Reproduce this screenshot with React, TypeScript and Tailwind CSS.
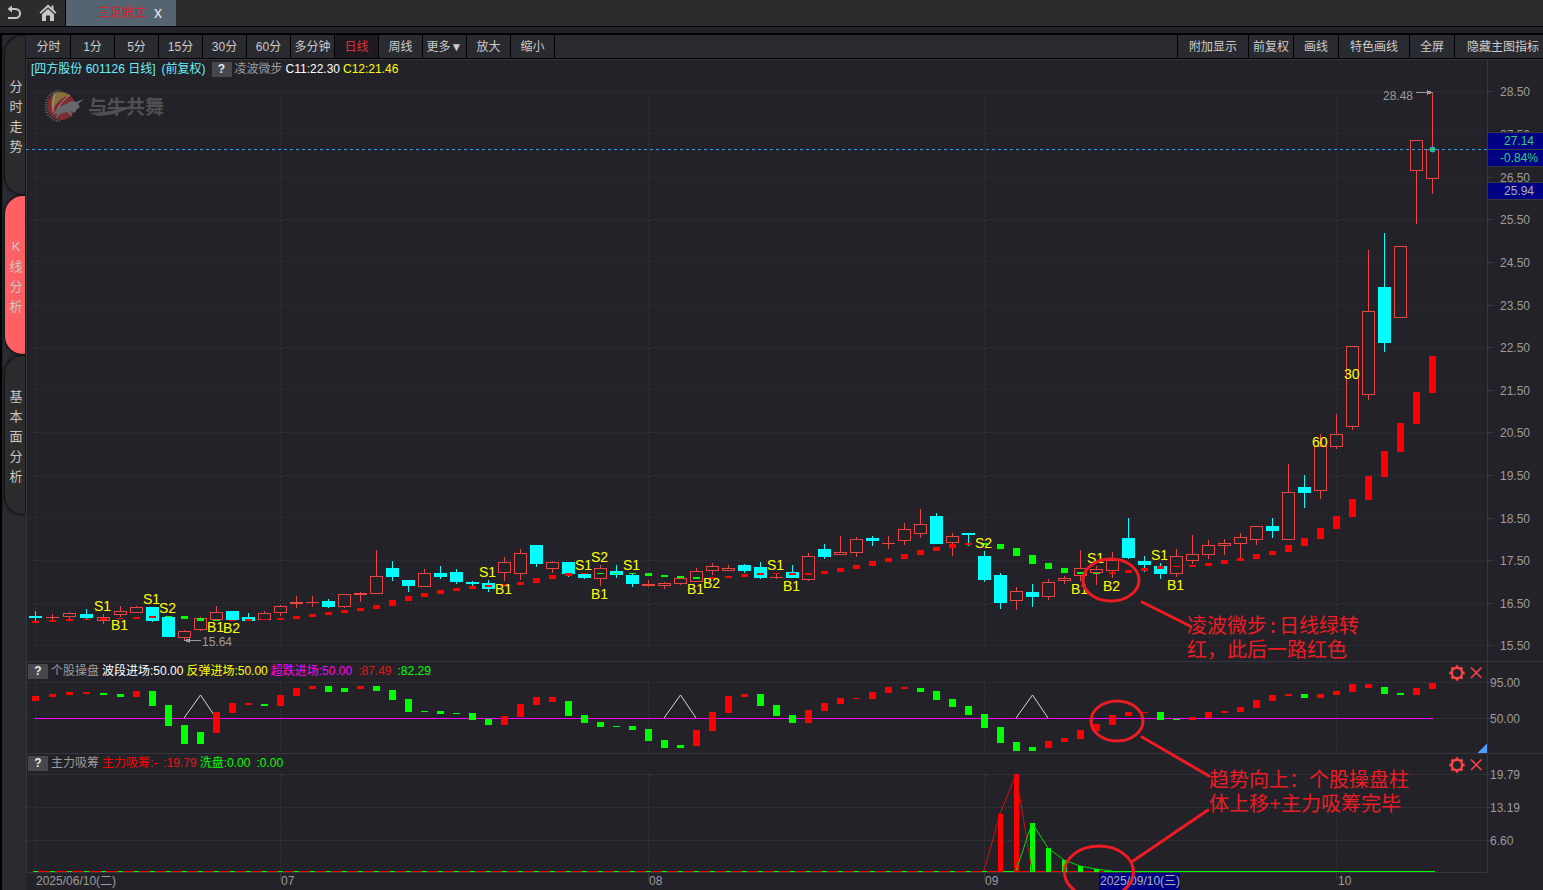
import React from "react";

type Bar = [number, number, number];
type Candle = [number, number, number, number, number];

// up(1)/down(0), high, body top, body bottom, low
const candles: Candle[] = [
  [0, 611, 616, 618, 621], [1, 614, 617, 618, 620], [1, 612, 613, 617, 619], [0, 609, 614, 618, 619],
  [1, 614, 617, 621, 624], [1, 606, 611, 615, 617], [1, 606, 607, 613, 613], [0, 607, 607, 621, 622],
  [0, 616, 617, 637, 637], [1, 630, 631, 638, 640], [1, 617, 618, 630, 631], [1, 606, 612, 620, 620],
  [0, 611, 611, 620, 620], [0, 613, 617, 621, 621], [1, 611, 613, 620, 620], [1, 605, 606, 613, 616],
  [1, 596, 602, 604, 608], [1, 596, 602, 603, 607], [0, 599, 601, 607, 608], [1, 594, 594, 607, 608],
  [1, 592, 593, 595, 602], [1, 550, 576, 594, 594], [0, 561, 568, 577, 581], [0, 580, 580, 586, 592],
  [1, 569, 573, 587, 587], [0, 566, 573, 577, 579], [0, 569, 572, 582, 584], [0, 581, 582, 584, 586],
  [0, 580, 583, 589, 592], [1, 557, 562, 573, 581], [1, 549, 553, 574, 580], [0, 545, 545, 564, 567],
  [1, 561, 562, 569, 573], [0, 562, 562, 574, 577], [0, 574, 574, 578, 579], [1, 565, 568, 579, 586],
  [0, 565, 571, 575, 578], [0, 573, 575, 584, 587], [1, 580, 584, 586, 587], [1, 582, 583, 586, 589],
  [1, 578, 578, 584, 585], [1, 568, 571, 582, 582], [1, 563, 566, 571, 575], [1, 565, 568, 571, 571],
  [0, 564, 565, 571, 573], [0, 562, 567, 578, 579], [1, 574, 577, 578, 579], [0, 565, 572, 578, 578],
  [1, 553, 556, 580, 581], [0, 544, 549, 557, 559], [1, 536, 552, 555, 555], [1, 537, 539, 553, 557],
  [0, 536, 538, 541, 546], [1, 536, 543, 544, 549], [1, 523, 529, 541, 545], [1, 509, 524, 534, 538],
  [0, 513, 516, 544, 544], [1, 533, 536, 543, 556], [0, 533, 533, 535, 546], [0, 551, 556, 580, 582],
  [0, 573, 575, 603, 609], [1, 587, 591, 601, 610], [0, 584, 592, 597, 607], [1, 579, 582, 597, 600],
  [1, 576, 578, 581, 584], [1, 550, 568, 576, 581], [1, 566, 569, 573, 585], [1, 552, 560, 571, 578],
  [0, 518, 538, 558, 559], [0, 556, 561, 565, 572], [0, 563, 566, 574, 579], [1, 549, 556, 574, 577],
  [1, 535, 554, 561, 564], [1, 540, 545, 555, 559], [1, 539, 543, 546, 555], [1, 533, 537, 544, 560],
  [1, 526, 526, 540, 545], [0, 518, 526, 531, 538], [1, 464, 492, 540, 540], [0, 475, 487, 493, 508],
  [1, 434, 446, 491, 499], [1, 414, 434, 447, 449], [1, 346, 346, 427, 430], [1, 250, 311, 395, 400],
  [0, 233, 287, 343, 352], [1, 246, 246, 318, 318], [1, 140, 140, 171, 224], [1, 92, 149, 179, 194],
];

// red(1)/green(0), top, bottom
const trend: Bar[] = [
  [1, 621, 623], [1, 620, 622], [1, 619, 621], [1, 619, 620], [1, 618, 620], [1, 618, 619], [1, 617, 619], [1, 616, 618],
  [0, 616, 617], [0, 616, 619], [0, 618, 621], [0, 620, 621], [1, 620, 621], [1, 619, 621], [1, 619, 620], [1, 618, 620],
  [1, 616, 619], [1, 614, 617], [1, 612, 615], [1, 610, 613], [1, 608, 611], [1, 605, 609], [1, 600, 606], [1, 596, 601],
  [1, 593, 597], [1, 590, 594], [1, 588, 591], [1, 586, 589], [1, 585, 587], [1, 584, 586], [1, 582, 585], [1, 578, 583],
  [1, 575, 579], [1, 573, 576], [1, 573, 574], [0, 573, 574], [0, 573, 574], [0, 573, 574], [0, 573, 576], [0, 575, 577],
  [0, 576, 578], [0, 577, 579], [1, 577, 579], [1, 576, 578], [1, 574, 577], [1, 573, 575], [1, 573, 574], [1, 573, 575],
  [1, 573, 575], [1, 571, 574], [1, 568, 572], [1, 565, 569], [1, 561, 566], [1, 558, 562], [1, 554, 559], [1, 550, 555],
  [1, 547, 551], [1, 544, 548], [1, 543, 545], [0, 543, 545], [0, 544, 549], [0, 548, 556], [0, 555, 564], [0, 563, 569],
  [0, 568, 573], [0, 572, 574], [0, 573, 574], [1, 572, 574], [1, 570, 573], [1, 568, 571], [1, 566, 569], [1, 566, 567],
  [1, 565, 567], [1, 563, 566], [1, 560, 564], [1, 558, 561], [1, 554, 559], [1, 551, 555], [1, 545, 552], [1, 538, 546],
  [1, 528, 539], [1, 516, 529], [1, 499, 517], [1, 476, 500], [1, 451, 477], [1, 423, 452], [1, 392, 424], [1, 356, 393],
];

const swing: Bar[] = [
  [1, 696, 701], [1, 694, 697], [1, 692, 695], [1, 692, 694], [0, 693, 695], [0, 694, 697], [1, 691, 697], [0, 691, 706],
  [0, 705, 726], [0, 725, 744], [0, 732, 744], [1, 712, 733], [1, 703, 713], [1, 703, 705], [0, 704, 706], [1, 695, 706],
  [1, 688, 696], [1, 686, 689], [0, 686, 692], [0, 688, 692], [1, 686, 689], [0, 686, 691], [0, 690, 700], [0, 699, 712],
  [0, 711, 712], [0, 711, 714], [0, 713, 714], [0, 713, 720], [0, 719, 725], [1, 716, 725], [1, 704, 717], [1, 697, 705],
  [1, 697, 702], [0, 701, 716], [0, 715, 723], [0, 722, 727], [0, 726, 727], [0, 726, 730], [0, 729, 741], [0, 740, 748],
  [0, 745, 748], [1, 730, 746], [1, 712, 731], [1, 696, 713], [1, 694, 697], [0, 694, 706], [0, 705, 716], [0, 715, 723],
  [1, 710, 723], [1, 703, 711], [1, 698, 704], [1, 698, 699], [1, 692, 699], [1, 687, 693], [1, 687, 689], [0, 688, 692],
  [0, 691, 700], [0, 699, 707], [0, 706, 715], [0, 714, 728], [0, 727, 743], [0, 742, 751], [0, 747, 751], [1, 741, 748],
  [1, 738, 742], [1, 730, 739], [1, 724, 731], [1, 715, 725], [1, 712, 716], [1, 712, 713], [0, 712, 720], [0, 719, 720],
  [1, 717, 720], [1, 712, 718], [1, 711, 713], [1, 707, 712], [1, 700, 708], [1, 695, 701], [1, 694, 696], [0, 694, 698],
  [1, 694, 698], [1, 691, 695], [1, 684, 692], [1, 684, 688], [0, 687, 694], [0, 693, 695], [1, 688, 695], [1, 683, 689],
];

const marks: [string, number, number][] = [
  ["S1", 94, 611], ["B1", 111, 630], ["S1", 143, 604], ["S2", 159, 613], ["B1", 207, 632], ["B2", 223, 633],
  ["S1", 479, 577], ["B1", 495, 594], ["S1", 575, 570], ["S2", 591, 562], ["B1", 591, 599], ["S1", 623, 570],
  ["B1", 687, 594], ["B2", 703, 588], ["S1", 767, 570], ["B1", 783, 591], ["S2", 975, 548], ["B1", 1071, 594],
  ["S1", 1087, 563], ["B2", 1103, 591], ["S1", 1151, 560], ["B1", 1167, 590], ["60", 1312, 447], ["30", 1344, 379],
];

const priceTicks: [string, number][] = [
  ["28.50", 91], ["27.50", 134], ["26.50", 177], ["25.50", 219], ["24.50", 262], ["23.50", 305], ["22.50", 347],
  ["21.50", 390], ["20.50", 432], ["19.50", 475], ["18.50", 518], ["17.50", 560], ["16.50", 603], ["15.50", 645],
];

const months = [35, 280, 648, 984, 1336];

const periods = ["分时", "1分", "5分", "15分", "30分", "60分", "多分钟", "日线", "周线", "更多▼", "放大", "缩小"];
const tools = ["附加显示", "前复权", "画线", "特色画线", "全屏", "隐藏主图指标"];
const sideTabs = ["分时走势", "K线分析", "基本面分析"];

const cx = (i: number) => (i < 6 ? 35 + 17 * i : 40 + 16 * i);
const barColor = (up: number) => (up ? "#ff0000" : "#00ff00");

const GRID = "#3b3b41";
const RULE = "#36363c";

const Bars = ({ data }: { data: Bar[] }) => (
  <>
    {data.map(([up, top, bottom], i) => (
      <rect key={i} x={cx(i) - 3} y={top} width={7} height={bottom - top} fill={barColor(up)} />
    ))}
  </>
);

const MonthLines = ({ from, to, dash }: { from: number; to: number; dash: string }) => (
  <>
    {months.map((x) => (
      <line key={x} x1={x + 0.5} x2={x + 0.5} y1={from} y2={to} stroke={GRID} strokeDasharray={dash} />
    ))}
  </>
);

const PriceChart = () => (
  <svg viewBox="26 59 1517 602" className="block w-full" shapeRendering="crispEdges" aria-label="K线图">
    <path d="M26.5 59V661M26 59.5H1543M1487.5 59V661" stroke={RULE} fill="none" />
    {priceTicks.map(([label, y]) => (
      <g key={label}>
        <line x1={30} x2={1487} y1={y + 0.5} y2={y + 0.5} stroke={GRID} strokeDasharray="1 3" />
        <line x1={1488} x2={1494} y1={y + 0.5} y2={y + 0.5} stroke={RULE} />
        <text x={1500} y={y + 5} fill="#9c9c9c">{label}</text>
      </g>
    ))}
    <MonthLines from={92} to={646} dash="1 3" />

    <Watermark />

    {candles.map(([up, high, top, bottom, low], i) => {
      const x = cx(i);
      const color = up ? "#e84545" : "#00ffff";
      const solid = !up || bottom - top < 3;
      return (
        <g key={i}>
          <rect x={x} y={high} width={1} height={top - high} fill={color} />
          <rect x={x} y={bottom} width={1} height={low - bottom} fill={color} />
          {solid ? (
            <rect x={x - 6} y={top} width={13} height={bottom - top} fill={color} />
          ) : (
            <rect x={x - 5.5} y={top + 0.5} width={12} height={bottom - top - 1} fill="none" stroke={color} />
          )}
        </g>
      );
    })}
    <Bars data={trend} />

    <g fill="#ffff00" fontSize={14}>
      {marks.map(([label, x, y], i) => (
        <text key={i} x={x} y={y}>{label}</text>
      ))}
    </g>

    <g fill="#9c9c9c" stroke="none">
      <text x={202} y={646}>15.64</text>
      <rect x={186} y={640} width={15} height={1} />
      <path d="M184 640.5L190 638V643Z" />
      <text x={1383} y={100}>28.48</text>
      <rect x={1416} y={92} width={15} height={1} />
      <path d="M1433 92.5L1427 90V95Z" />
    </g>

    {/* last price */}
    <line x1={26} x2={1487} y1={149.5} y2={149.5} stroke="#3399ee" strokeDasharray="3 3" />
    <circle cx={1432.5} cy={149.5} r={3} fill="#3399ee" shapeRendering="auto" />
    <circle cx={1432.5} cy={149.5} r={2.2} fill="#22cc55" shapeRendering="auto" />
    <rect x={1488} y={132} width={55} height={35} fill={RULE} />
    <rect x={1488} y={182} width={55} height={18} fill={RULE} />
    <rect x={1488} y={133} width={55} height={16} fill="#000084" />
    <rect x={1488} y={150} width={55} height={16} fill="#000084" />
    <rect x={1488} y={183} width={55} height={16} fill="#000084" />
    <text x={1504} y={145} fill="#2fd070">27.14</text>
    <text x={1500} y={162} fill="#2fd070">-0.84%</text>
    <text x={1504} y={195} fill="#b0b0b0">25.94</text>
  </svg>
);

const Watermark = () => (
  <g shapeRendering="auto">
    <circle cx={61} cy={106} r={14} fill="#7c2b30" />
    <path d="M54 93Q62 90 70 95Q60 97 52 110Q50 101 54 93Z" fill="#83703a" />
    <path d="M55 94Q52 103 53 112M70 95Q60 102 56 112" stroke="#a99a94" strokeWidth={1} fill="none" />
    <circle cx={61} cy={106} r={15.5} fill="none" stroke="#68686c" strokeWidth={2} strokeDasharray="1 1.4" pathLength={90} clipPath="inset(0 50% 0 0)" />
    <path d="M52 115Q57 107 66 104Q71 100 76 102L84 99L78 104L80 107Q76 109 75 113L71 111L72 117L67 112L60 114L56 119L57 113Z" fill="#68686c" />
    <path d="M90 113Q118 112 138 103Q118 116 98 116Z" fill="#505054" />
    <text x={88} y={114} fontSize={19} fontWeight={700} fill="#505054">与牛共舞</text>
  </g>
);

const SwingChart = () => (
  <svg viewBox="26 661 1517 92" className="block w-full" shapeRendering="crispEdges" aria-label="个股操盘">
    <path d="M26.5 661V753M26 661.5H1543M1487.5 661V753" stroke={RULE} fill="none" />
    <path d="M28 682.5H1487M28 718.5H1487" stroke={GRID} strokeDasharray="1 1" />
    <path d="M1488 682.5H1492M1488 718.5H1492" stroke={RULE} />
    <MonthLines from={684} to={753} dash="1 2" />
    <rect x={35} y={718} width={1398} height={1} fill="#ff00ff" />
    <path d="M184 718L200.5 695L216 718M664 718L680.5 695L696 718M1016 718L1032.5 695L1048 718" stroke="#d8d8d8" fill="none" shapeRendering="auto" />
    <Bars data={swing} />
    <path d="M1487 743V753H1477Z" fill="#4f9bff" />
    <g fill="#9c9c9c">
      <text x={1490} y={687}>95.00</text>
      <text x={1490} y={723}>50.00</text>
    </g>
  </svg>
);

const washBars: Bar[] = [[1, 1000, 814], [1, 1016, 774], [0, 1032, 823], [0, 1048, 848], [0, 1064, 860], [0, 1080, 866], [0, 1096, 869]];

const MainForceChart = () => (
  <svg viewBox="26 753 1517 137" className="block w-full" shapeRendering="crispEdges" aria-label="主力吸筹">
    <path d="M26.5 753V872M26 753.5H1543M1487.5 753V872M26 872.5H1487" stroke={RULE} fill="none" />
    <path d="M28 774.5H1487M28 807.5H1487M28 840.5H1487" stroke={GRID} strokeDasharray="1 1" />
    <path d="M1488 774.5H1492M1488 807.5H1492M1488 840.5H1492" stroke={RULE} />
    <MonthLines from={775} to={871} dash="1 2" />
    <path d="M280.5 872V880M648.5 872V880M984.5 872V880M1336.5 872V880" stroke={RULE} />

    <rect x={35} y={871} width={1077} height={1} fill="#ff0000" />
    {candles.map((_, i) => (
      <rect key={i} x={cx(i) - 2} y={871} width={5} height={1} fill="#00ff00" />
    ))}
    <rect x={1104} y={871} width={331} height={1} fill="#00ff00" />
    <rect x={1000} y={871} width={16} height={1} fill="#00ff00" />
    {washBars.map(([up, x, top]) => (
      <rect key={x} x={x - 2} y={top} width={5} height={872 - top} fill={barColor(up)} />
    ))}
    <g fill="none" shapeRendering="auto">
      <path d="M984 871L1000 814L1016 774L1032 871" stroke="#d01010" />
      <path d="M1016 871L1032 823L1048 848L1064 860L1080 866L1096 869L1112 871" stroke="#00d800" />
    </g>

    <rect x={1099} y={873} width={81} height={17} fill="#000084" />
    <g fill="#9c9c9c">
      <text x={1490} y={779}>19.79</text>
      <text x={1490} y={812}>13.19</text>
      <text x={1490} y={845}>6.60</text>
      <text x={36} y={885}>2025/06/10(二)</text>
      <text x={281} y={885}>07</text>
      <text x={649} y={885}>08</text>
      <text x={985} y={885}>09</text>
      <text x={1338} y={885}>10</text>
      <text x={1100} y={885} fill="#b0b0b0">2025/09/10(三)</text>
    </g>
  </svg>
);

const Annotations = () => (
  <svg viewBox="26 59 1517 831" className="pointer-events-none absolute inset-0 w-full">
    <g stroke="#ed1c24" strokeWidth={3} fill="none" strokeLinecap="round">
      <ellipse cx={1111} cy={580} rx={28} ry={21} />
      <path d="M1142 602L1190 626" />
      <ellipse cx={1117} cy={721} rx={26} ry={20} />
      <path d="M1142 737L1209 776" />
      <ellipse cx={1099} cy={872} rx={34.5} ry={26} />
      <path d="M1133 861L1208 810" />
    </g>
    <g fill="#ed1c24" fontSize={20} style={{ fontFamily: '"Liberation Mono", "Noto Sans CJK SC", monospace' }}>
      <text x={1187} y={633}>凌波微步:日线绿转</text>
      <text x={1187} y={657}>红，此后一路红色</text>
      <text x={1209} y={787}>趋势向上：个股操盘柱</text>
      <text x={1209} y={811}>体上移+主力吸筹完毕</text>
    </g>
  </svg>
);

const HelpButton = () => (
  <button className="flex h-[15px] w-5 items-center justify-center bg-[#48484c] text-xs leading-none font-bold text-gray-200">?</button>
);

const Legend = ({ children }: { children: React.ReactNode }) => (
  <div className="absolute top-0 left-0 flex h-5 items-center gap-[3px] whitespace-nowrap text-[#9c9c9c]">{children}</div>
);

const PanelButtons = () => (
  <div className="absolute top-1 right-[60px] flex items-center gap-1 text-[#ff4444]">
    <button aria-label="设置">
      <svg width="16" height="16" viewBox="0 0 16 16" fill="none" stroke="currentColor" className="block">
        <circle cx="8" cy="8" r="5.2" strokeWidth="2.4" />
        <circle cx="8" cy="8" r="6.8" strokeWidth="1.8" pathLength="80" strokeDasharray="5 5" strokeDashoffset="2.5" />
      </svg>
    </button>
    <button aria-label="关闭">
      <svg width="14" height="14" viewBox="0 0 14 14" fill="none" stroke="currentColor" strokeWidth="1.5" className="block">
        <path d="M2 1.5L12.500 12M12.500 1.5L2 12" />
      </svg>
    </button>
  </div>
);

export default function App() {
  return (
    <div
      className="flex min-h-screen flex-col overflow-hidden bg-[#232228] text-xs"
      style={{ fontFamily: '"Liberation Sans", "Noto Sans CJK SC", sans-serif' }}
    >
      <header className="flex h-[27px] border-b border-black bg-[#2c2c2c] text-[#c8c8c8]">
        <button aria-label="返回" className="flex w-7 items-center justify-center">
          <svg width="16" height="16" viewBox="0 0 16 16" fill="none" stroke="currentColor" strokeWidth="2">
            <path d="M3 4H9.5A4.5 4.5 0 0 1 9.5 13H2" />
            <path d="M6 0.500L1.5 4L6 7.5Z" fill="currentColor" stroke="none" />
          </svg>
        </button>
        <button aria-label="首页" className="flex w-[37px] items-center justify-center pl-[2px]">
          <svg width="18" height="18" viewBox="0 0 18 18" fill="currentColor">
            <path d="M9 0.500L0.500 8.5L1.8 9.8L9 3.2L16.2 9.8L17.5 8.5L14.5 5.6V1.5H12.5V3.8Z" />
            <path d="M9 4.8L3 10.3V17H7V11.5H11V17H15V10.3Z" />
          </svg>
        </button>
        <div className="flex w-[111px] items-center gap-2 border-l border-black bg-[#566370] pl-8">
          <a href="#" className="leading-5 text-[#d8232a]">三足鼎立</a>
          <button aria-label="关闭标签" className="text-base leading-none text-gray-200">x</button>
        </div>
      </header>

      <main className="mt-[6px] flex border-t-2 border-black">
        <nav className="flex w-[26px] shrink-0 flex-col gap-[2px] border-l-2 border-black bg-[#2a2a31] pt-px pl-[3px] shadow-[inset_1px_0_0_#232228]">
          {sideTabs.map((tab) => (
            <button
              key={tab}
              className={
                "flex h-[158px] w-5 flex-col items-center justify-center rounded-l-[18px] pt-1 pl-[2px] text-[13px] leading-5 text-[#c8c8c8] shadow-[0_0_3px_1px_#0c0c0e] " +
                (tab === "K线分析" ? "bg-[#ff6064]" : "bg-[#2c2c2c]")
              }
            >
              {tab.split("").map((ch, i) => (
                <span key={i}>{ch}</span>
              ))}
            </button>
          ))}
        </nav>

        <div className="min-w-0 flex-1">
          <div className="flex h-6 border-b border-black bg-[#2a2a31] pl-px text-[#cccccc]">
            {periods.map((p) => (
              <button
                key={p}
                className={
                  "w-11 shrink-0 whitespace-nowrap border-r border-black " + (p === "日线" ? "bg-[#1c1a20] text-[#e03038]" : "")
                }
              >
                {p}
              </button>
            ))}
            <div className="ml-auto flex">
              {tools.map((t) => (
                <button
                  key={t}
                  className={
                    "shrink-0 whitespace-nowrap border-l border-black " + (t === "前复权" ? "px-1" : t === "隐藏主图指标" ? "pr-1 pl-3" : t.length > 2 ? "px-[11px]" : "px-[10px]")
                  }
                >
                  {t}
                </button>
              ))}
            </div>
          </div>

          <div className="relative">
            <section className="relative">
              <PriceChart />
              <Legend>
                <span className="pl-[5px] text-[#6cf0f8]">[四方股份 601126 日线]</span>
                <span className="px-[3px] text-[#6cf0f8]">(前复权)</span>
                <HelpButton />
                <span>凌波微步</span>
                <span className="text-white">C11:22.30</span>
                <span className="text-[#ffff00]">C12:21.46</span>
              </Legend>
            </section>
            <section className="relative">
              <SwingChart />
              <Legend>
                <span className="pl-[2px]"><HelpButton /></span>
                <span>个股操盘</span>
                <span className="text-white">波段进场:50.00</span>
                <span className="text-[#ffff00]">反弹进场:50.00</span>
                <span className="text-[#ff00ff]">超跌进场:50.00</span>
                <span className="pl-[3px] text-[#e01818]">:87.49</span>
                <span className="pl-[3px] text-[#00ff00]">:82.29</span>
              </Legend>
              <PanelButtons />
            </section>
            <section className="relative">
              <MainForceChart />
              <Legend>
                <span className="pl-[2px]"><HelpButton /></span>
                <span>主力吸筹</span>
                <span className="text-[#ff0000]">主力吸筹:-</span>
                <span className="pl-[3px] text-[#e01818]">:19.79</span>
                <span className="text-[#00ff00]">洗盘:0.00</span>
                <span className="pl-[3px] text-[#00ff00]">:0.00</span>
              </Legend>
              <PanelButtons />
            </section>
            <Annotations />
          </div>
        </div>
      </main>
    </div>
  );
}
